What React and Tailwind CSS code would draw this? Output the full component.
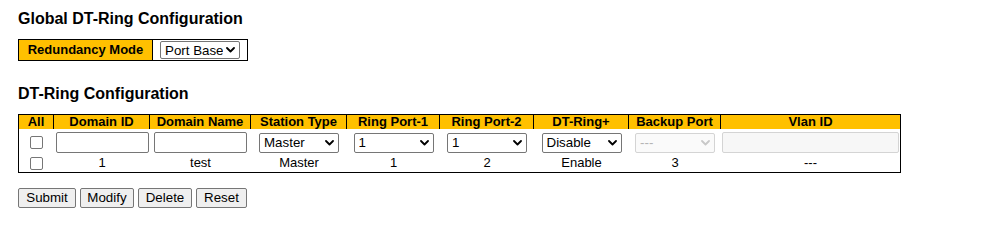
import React from 'react';

const Chevron = ({ disabled }) => (
  <svg
    width="9"
    height="6"
    viewBox="0 0 9 6"
    className="pointer-events-none absolute right-[5px] top-1/2 -translate-y-1/2"
  >
    <path
      d="M1 1L4.5 4.5L8 1"
      fill="none"
      stroke={disabled ? '#c8c8c8' : '#000'}
      strokeWidth="1.8"
      strokeLinecap="round"
      strokeLinejoin="round"
    />
  </svg>
);

const Select = ({ value, options, disabled, height = 'h-[20px]' }) => (
  <div className={`relative w-[80px] ${height}`}>
    <select
      disabled={disabled}
      defaultValue={value}
      className={
        disabled
          ? 'block h-full w-full appearance-none rounded-[2px] border border-[#d4d4d4] bg-[#fafafa] py-0 pl-[4px] pr-[16px] text-[13.33px] leading-[15px] text-[#b4b4b4]'
          : 'block h-full w-full appearance-none rounded-[2px] border border-[#767676] bg-white py-0 pl-[4px] pr-[16px] text-[13.33px] leading-[15px] text-black'
      }
    >
      {options.map((o) => (
        <option key={o}>{o}</option>
      ))}
    </select>
    <Chevron disabled={disabled} />
  </div>
);

const Checkbox = () => (
  <input
    type="checkbox"
    className="block h-[13px] w-[13px] appearance-none rounded-[2px] border border-[#767676] bg-white"
  />
);

const headers = [
  'All',
  'Domain ID',
  'Domain Name',
  'Station Type',
  'Ring Port-1',
  'Ring Port-2',
  'DT-Ring+',
  'Backup Port',
  'Vlan ID',
];

const ports = ['1', '2', '3', '4', '5', '6', '7', '8'];

const App = () => {
  const rowCell = 'flex h-[25px] items-center justify-center pt-[2px]';
  const dataCell = 'flex h-[18px] items-center justify-center text-[13px]';

  return (
    <div className="min-h-[225px] bg-white pl-[18px] pt-[10px] font-['Liberation_Sans',Arial,sans-serif] text-black">
      <h1 className="text-[16px] font-bold leading-[18px]">Global DT-Ring Configuration</h1>

      <div className="mt-[11px] flex h-[22px] w-[230px] border border-black">
        <div className="flex w-[134px] items-center justify-center border-r border-black bg-[#ffc000] text-[13px] font-bold">
          Redundancy Mode
        </div>
        <div className="flex items-center pl-[7px]">
          <Select value="Port Base" options={['Port Base', 'Ring Base']} height="h-[18px]" />
        </div>
      </div>

      <h2 className="mt-[24px] text-[16px] font-bold leading-[18px]">DT-Ring Configuration</h2>

      <div className="mt-[11px] w-[883px] border border-black">
        <div className="grid grid-cols-[35px_96px_101px_96px_93px_94px_95px_92px_179px] bg-[#ffc000]">
          {headers.map((h, i) => (
            <div
              key={h}
              className={
                i < headers.length - 1
                  ? 'h-[14px] border-r border-black text-center text-[13px] font-bold leading-[14px]'
                  : 'h-[14px] text-center text-[13px] font-bold leading-[14px]'
              }
            >
              {h}
            </div>
          ))}
        </div>

        <div className="grid grid-cols-[35px_96px_101px_96px_93px_94px_95px_92px_179px]">
          <div className={rowCell}>
            <Checkbox />
          </div>
          <div className={rowCell}>
            <input type="text" className="h-[21px] w-[93px] rounded-[2px] border border-[#767676] bg-white" />
          </div>
          <div className={rowCell}>
            <input type="text" className="h-[21px] w-[93px] rounded-[2px] border border-[#767676] bg-white" />
          </div>
          <div className={rowCell}>
            <Select value="Master" options={['Master', 'Slave']} />
          </div>
          <div className={rowCell}>
            <Select value="1" options={ports} />
          </div>
          <div className={rowCell}>
            <Select value="1" options={ports} />
          </div>
          <div className={rowCell}>
            <Select value="Disable" options={['Disable', 'Enable']} />
          </div>
          <div className={rowCell}>
            <Select value="---" options={['---']} disabled />
          </div>
          <div className={rowCell}>
            <input
              type="text"
              disabled
              className="h-[21px] w-[177px] rounded-[2px] border border-[#d4d4d4] bg-[#f7f7f7]"
            />
          </div>

          <div className={dataCell}>
            <Checkbox />
          </div>
          <div className={dataCell}>1</div>
          <div className={dataCell}>test</div>
          <div className={dataCell}>Master</div>
          <div className={dataCell}>1</div>
          <div className={dataCell}>2</div>
          <div className={dataCell}>Enable</div>
          <div className={dataCell}>3</div>
          <div className={dataCell}>---</div>
        </div>
      </div>

      <div className="mt-[15px] flex gap-[4px]">
        {[
          ['Submit', 'w-[58px]'],
          ['Modify', 'w-[54px]'],
          ['Delete', 'w-[54px]'],
          ['Reset', 'w-[51px]'],
        ].map(([label, w]) => (
          <button
            key={label}
            type="button"
            className={`${w} h-[20px] rounded-[2px] border border-[#767676] bg-[#efefef] text-[13.33px] leading-[16px]`}
          >
            {label}
          </button>
        ))}
      </div>
    </div>
  );
};

export default App;
